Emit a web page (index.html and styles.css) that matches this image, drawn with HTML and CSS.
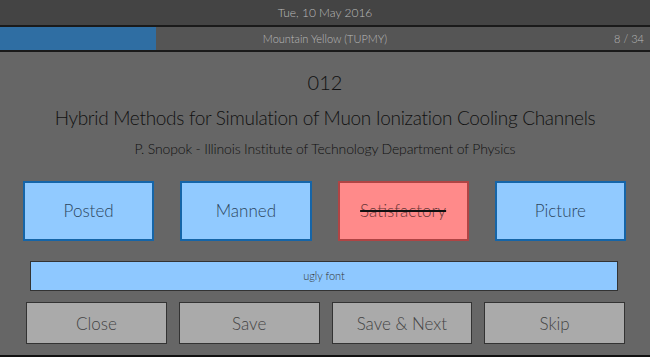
FILE: index.html
```html
<!DOCTYPE html>
<html lang="en">
<head>
  <meta charset="UTF-8">
  <meta name="viewport" content="width=device-width, initial-scale=1.0">
  <title>Poster Judging</title>
  <link rel="stylesheet" href="styles.css">
</head>
<body>

<!-- Date bar -->
<div class="date-bar">Tue, 10 May 2016</div>

<!-- Progress bar -->
<div class="progress-bar">
  <div class="progress-fill"></div>
  <span class="session">Mountain Yellow (TUPMY)</span>
  <span class="count">8 / 34</span>
</div>

<div class="main">
  <div class="number">012</div>
  <div class="title">Hybrid Methods for Simulation of Muon Ionization Cooling Channels</div>
  <div class="author">P. Snopok - Illinois Institute of Technology Department of Physics</div>

  <div class="status-row">
    <div class="status on">Posted</div>
    <div class="status on">Manned</div>
    <div class="status off">Satisfactory</div>
    <div class="status on">Picture</div>
  </div>

  <div class="comment">ugly font</div>

  <div class="actions">
    <button>Close</button>
    <button>Save</button>
    <button>Save &amp; Next</button>
    <button>Skip</button>
  </div>
</div>

</body>
</html>
```

FILE: styles.css
```css
body {
  margin: 0;
  font-family: Lato, "Open Sans", sans-serif;
  background-color: #666;
  height: 357px;
  overflow: hidden;
  border-bottom: 2px solid #111;
  box-sizing: border-box;
}

/* Top bars */
.date-bar {
  height: 25px;
  line-height: 25px;
  background-color: #444;
  color: #bbb;
  font-size: 12px;
  font-weight: 300;
  text-align: center;
  border-bottom: 2px solid #1a1a1a;
}

.progress-bar {
  position: relative;
  height: 23px;
  line-height: 23px;
  background-color: #555;
  color: #bbb;
  font-size: 11px;
  font-weight: 300;
  text-align: center;
  border-bottom: 2px solid #1a1a1a;
}

.progress-fill {
  position: absolute;
  top: 0;
  left: 0;
  bottom: 0;
  width: 156px;
  background-color: #2f6ea3;
}

.session {
  position: relative;
}

.count {
  position: absolute;
  right: 6px;
  top: 0;
}

/* Poster info */
.main {
  padding-top: 18px;
  text-align: center;
  color: #111;
  font-weight: 300;
}

.number {
  font-size: 20px;
  line-height: 24px;
}

.title {
  margin-top: 11px;
  font-size: 19px;
  line-height: 26px;
  letter-spacing: -0.3px;
}

.author {
  margin-top: 8px;
  font-size: 14px;
  line-height: 20px;
  letter-spacing: -0.15px;
}

/* Status toggles */
.status-row {
  display: grid;
  grid-template-columns: repeat(4, 1fr);
  gap: 26px;
  padding: 0 24px 0 23px;
  margin-top: 22px;
}

.status {
  height: 56px;
  line-height: 56px;
  font-size: 17px;
  font-weight: 300;
  border: 2px solid #1565a8;
  background-color: #91caff;
  color: #2c4660;
}

.status.off {
  background-color: #ff8a8a;
  border-color: #b04444;
  color: #6a3838;
  text-decoration: line-through;
  text-decoration-color: #111;
  text-decoration-thickness: 2px;
}

/* Comment */
.comment {
  margin: 20px 32px 0 30px;
  height: 28px;
  line-height: 28px;
  border: 1px solid #333;
  background-color: #8ec8ff;
  color: #333;
  font-size: 11px;
}

/* Action buttons */
.actions {
  display: grid;
  grid-template-columns: repeat(4, 1fr);
  gap: 12px;
  padding: 0 25px 0 26px;
  margin-top: 11px;
}

button {
  height: 42px;
  font-family: inherit;
  font-size: 17px;
  font-weight: 300;
  color: #444;
  background-color: #aaa;
  border: 1px solid #333;
  padding: 0;
}
```
